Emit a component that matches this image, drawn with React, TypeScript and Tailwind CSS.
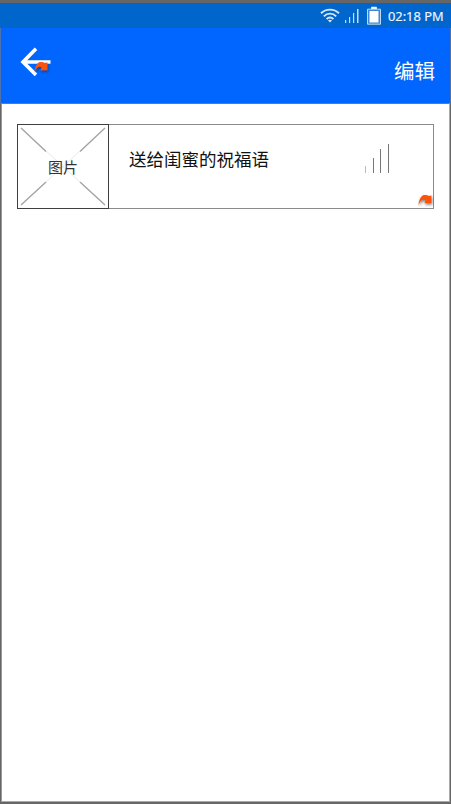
import React from "react";

function Marker({ className }: { className: string }) {
  return (
    <svg className={className} width="18" height="16" viewBox="0 0 18 16">
      <defs>
        <filter id="marker-shadow" x="-30%" y="-30%" width="170%" height="170%">
          <feDropShadow dx="0.7" dy="1.4" stdDeviation="1.1" floodColor="#222" floodOpacity="0.6" />
        </filter>
      </defs>
      <path
        d="M1.5 10.8C2 6 3.8 2 6.8 1.1C8.8 .6 10.6 1 11.6 1.9L14.4 1.5V9.3H7.4L8.6 6.4C6.2 4.6 3.5 6.7 1.5 10.8Z"
        fill="#fa5210"
        filter="url(#marker-shadow)"
      />
    </svg>
  );
}

function StatusBar() {
  return (
    <div className="flex h-[25px] shrink-0 items-center bg-[#0066cc] pr-[7px] pl-[320px]">
      <svg width="20" height="15" viewBox="0 0 20 15" className="shrink-0" fill="none" stroke="#d5e7fa" strokeWidth="1.9">
        <path d="M1 5.2C6 .4 14 .4 19 5.2" />
        <path d="M3.8 8.3C7.4 4.7 12.6 4.7 16.2 8.3" />
        <path d="M6.6 11.2C8.6 9 11.4 9 13.4 11.2" />
        <path d="M8 12.4L10 14.6L12 12.4Q10 11.2 8 12.4Z" fill="#d5e7fa" stroke="none" />
      </svg>
      <svg width="14" height="16" viewBox="0 0 14 16" className="ml-[5px] shrink-0 fill-[#c4ddf5]">
        <path d="M0 12h1.2v3H0zM4 9h1.2v6H4zM8 5h1.2v10H8zM12 1h1.5v14H12z" />
      </svg>
      <svg width="14" height="19" viewBox="0 0 14 19" className="ml-[8px] shrink-0">
        <path d="M4.5 1.2h5v2h4v15H.5v-15h4z" fill="#3c88d8" stroke="#c0daf4" />
        <rect x="4.5" y="1" width="5" height="2.5" fill="#e8f2fc" />
        <rect x="2.5" y="5" width="9" height="11.5" fill="#fff" />
      </svg>
      <svg width="57" height="20" className="ml-[7px] shrink-0 font-['Open_Sans','Noto_Sans',sans-serif]">
        <text x="0" y="14.5" fontSize="12.5" fill="#f0f7ff" stroke="#f0f7ff" strokeWidth=".2" textLength="55.5" lengthAdjust="spacingAndGlyphs">02:18 PM</text>
      </svg>
    </div>
  );
}

function Header() {
  return (
    <header className="flex h-[75px] shrink-0 items-start justify-between border-x border-[#4f72ad] bg-[#0066ff] pr-[15px] pl-[19px]">
      <div className="relative mt-[18px] h-8 w-8">
        <svg width="32" height="32" viewBox="0 0 32 32" fill="none" stroke="#fff" strokeWidth="3.6">
          <path d="M16 2.8L3 16L16 28.9M3 16H30.5" />
        </svg>
        <Marker className="absolute top-[15px] left-[13px]" />
      </div>
      <button className="mt-[27px] text-[20.5px] leading-[30px] text-white">编辑</button>
    </header>
  );
}

function Picture() {
  return (
    <div className="relative flex w-[92px] shrink-0 items-center justify-center border border-[#3f3f3f]">
      <svg className="absolute inset-0" width="90" height="83" viewBox="0 0 90 83" fill="none">
        <path d="M3 3L87 80M87 3L3 80" stroke="#e9e9e9" />
        <path d="M3 3L28 26.5M87 3L62 26.5M3 80L28 57M87 80L62 57" stroke="#a3a3a3" strokeWidth="1.3" />
      </svg>
      <span className="relative mt-px text-[15px] leading-5 text-[#333]">图片</span>
    </div>
  );
}

function Card() {
  return (
    <section className="relative mt-5 ml-[15px] flex h-[85px] w-[417px] border border-[#8a8a8a]">
      <div className="-m-px flex">
        <Picture />
      </div>
      <h1 className="mt-[21px] ml-[21px] text-[17.5px] leading-[26px] whitespace-nowrap text-[#111]">送给闺蜜的祝福语</h1>
      <svg width="26" height="30" viewBox="0 0 26 30" className="mt-[19px] mr-[42px] ml-auto" stroke="#777">
        <path d="M.5 29V22" stroke="#bbb" />
        <path d="M8.5 29V14M15.5 29V5M23.5 29V0" />
      </svg>
      <Marker className="absolute right-[-2px] bottom-[-2px]" />
    </section>
  );
}

export default function App() {
  return (
    <div className="flex h-[804px] w-[451px] flex-col bg-[#666] pt-[3px] font-['Noto_Sans_CJK_SC',sans-serif]">
      <StatusBar />
      <Header />
      <main className="mr-px mb-[2px] ml-px grow border border-[#aaa] border-t-[#777] border-l-[#999] bg-white">
        <Card />
      </main>
    </div>
  );
}
